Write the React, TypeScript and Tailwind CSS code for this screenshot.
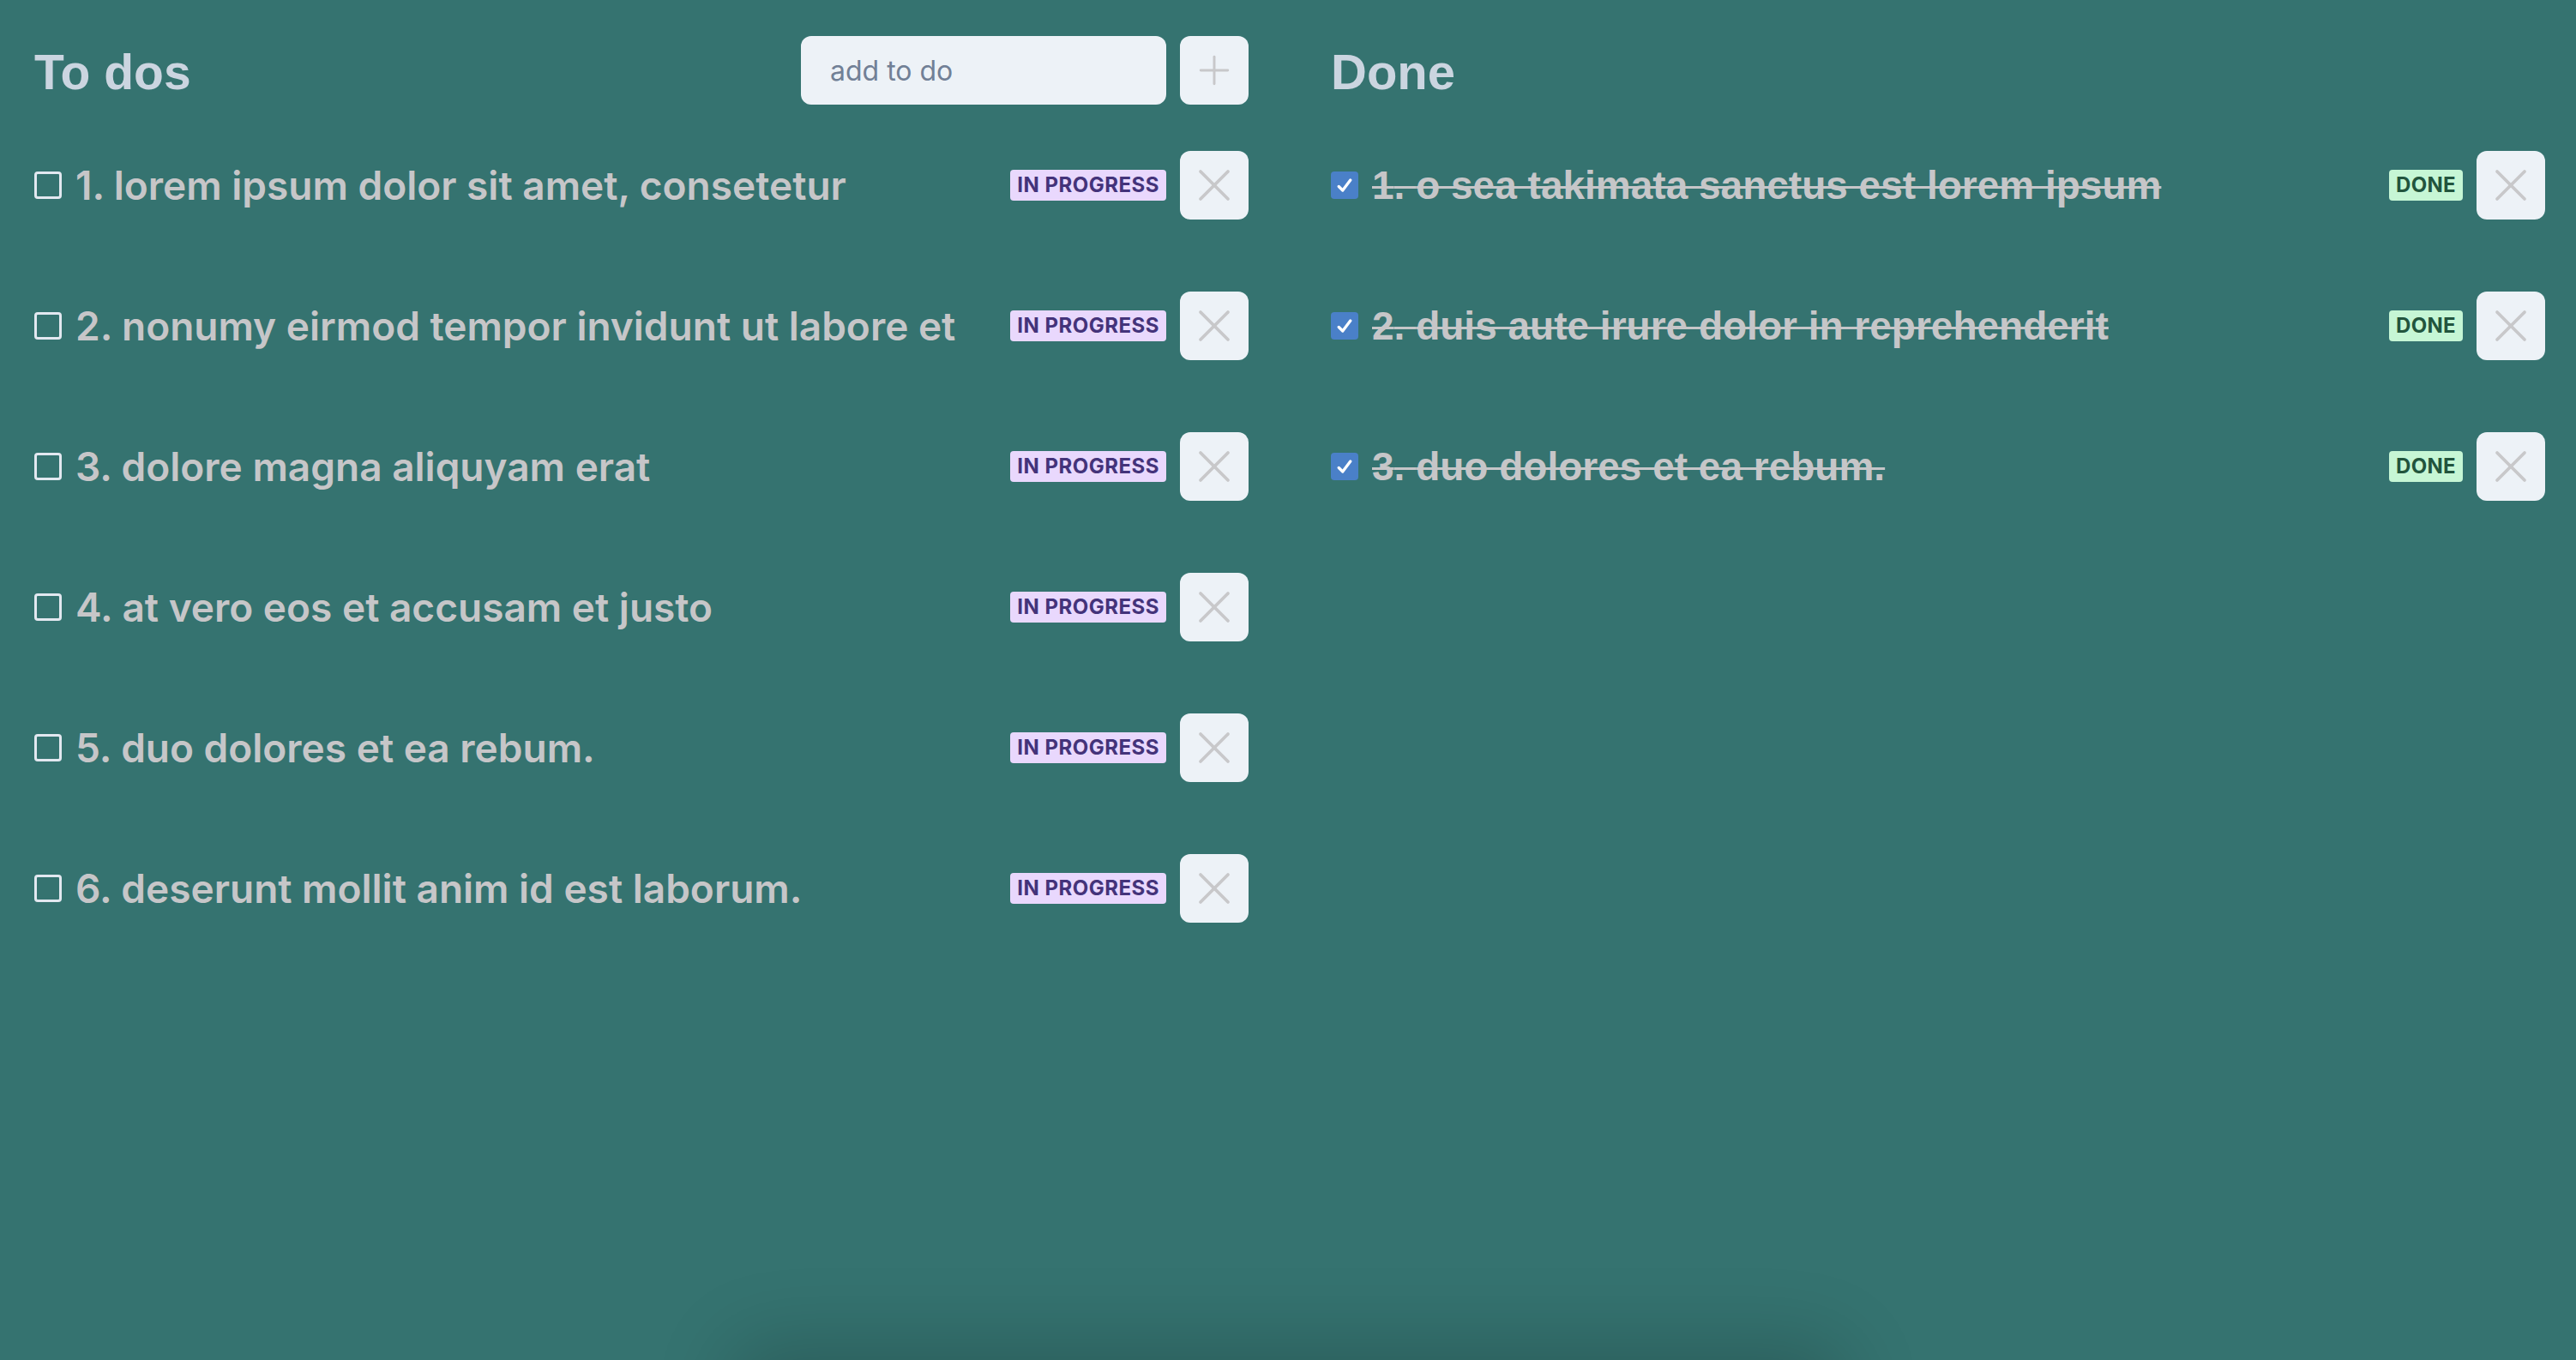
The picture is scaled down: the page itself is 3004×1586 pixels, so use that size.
import { X, Plus } from 'lucide-react'

const todos = [
  'lorem ipsum dolor sit amet, consetetur',
  'nonumy eirmod tempor invidunt ut labore et',
  'dolore magna aliquyam erat',
  'at vero eos et accusam et justo',
  'duo dolores et ea rebum.',
  'deserunt mollit anim id est laborum.',
]

const done = [
  'o sea takimata sanctus est lorem ipsum',
  'duis aute irure dolor in reprehenderit',
  'duo dolores et ea rebum.',
]

function IconButton({ children, title }: { children: React.ReactNode; title: string }) {
  return (
    <button
      type="button"
      title={title}
      className="w-[80px] h-[80px] shrink-0 flex items-center justify-center rounded-[12px] bg-[#edf2f7] text-[#c8c8ca]"
    >
      {children}
    </button>
  )
}

function Row({ text, index, checked }: { text: string; index: number; checked?: boolean }) {
  return (
    <div className="flex items-center h-[80px]">
      {/* Checkbox */}
      {checked ? (
        <span className="w-[32px] h-[32px] shrink-0 rounded-[4px] bg-[#4a80c8] flex items-center justify-center">
          <svg viewBox="0 0 12 10" className="w-[18px] h-[16px]" fill="none" stroke="white" strokeWidth={2.2} strokeLinecap="round" strokeLinejoin="round">
            <polyline points="1.5 6 4.5 9 10.5 1" />
          </svg>
        </span>
      ) : (
        <span className="w-[32px] h-[32px] shrink-0 rounded-[4px] border-[3px] border-[#e2e8f0]" />
      )}
      <span
        className={`ml-[16px] flex-1 text-[46px] leading-none text-[#c6c6c8] whitespace-nowrap ${
          checked
            ? "font-['Liberation_Sans',Arial,sans-serif] font-bold line-through decoration-[3px]"
            : "font-['Inter',sans-serif] font-semibold"
        }`}
      >
        {index}. {text}
      </span>
      {/* Status badge */}
      {checked ? (
        <span className="mr-[16px] px-[8px] h-[36px] flex items-center rounded-[4px] bg-[#c6f6d5] text-[#22543d] text-[24px] font-bold tracking-[0.3px] font-['Inter',sans-serif]">
          DONE
        </span>
      ) : (
        <span className="mr-[16px] px-[8px] h-[36px] flex items-center rounded-[4px] bg-[#e9d8fd] text-[#44337a] text-[24px] font-bold tracking-[0.5px] font-['Inter',sans-serif]">
          IN PROGRESS
        </span>
      )}
      <IconButton title="Delete">
        <X className="w-[64px] h-[64px]" strokeWidth={1.4} />
      </IconButton>
    </div>
  )
}

export default function App() {
  return (
    <div className="relative h-[1586px] overflow-hidden bg-[#357370]">
      <div className="grid grid-cols-2 gap-[96px] pl-[40px] pr-[36px] pt-[42px]">
        {/* To dos column */}
        <div>
          <div className="flex items-center justify-between h-[80px]">
            <h2 className="mt-[4px] text-[57px] font-bold leading-none text-[#cbd5e0] font-['Liberation_Sans',Arial,sans-serif]">
              To dos
            </h2>
            <div className="flex items-center gap-[16px]">
              <input
                placeholder="add to do"
                className="w-[426px] h-[80px] rounded-[12px] bg-[#edf2f7] px-[34px] text-[32px] font-['Inter',sans-serif] placeholder:text-[#718096] outline-none"
              />
              <IconButton title="Add">
                <Plus className="w-[54px] h-[54px]" strokeWidth={1.3} />
              </IconButton>
            </div>
          </div>
          <div className="mt-[54px] flex flex-col gap-[84px]">
            {todos.map((t, i) => (
              <Row key={t} text={t} index={i + 1} />
            ))}
          </div>
        </div>

        {/* Done column */}
        <div>
          <div className="flex items-center h-[80px]">
            <h2 className="mt-[4px] text-[58px] font-bold leading-none text-[#cbd5e0] font-['Liberation_Sans',Arial,sans-serif]">
              Done
            </h2>
          </div>
          <div className="mt-[54px] flex flex-col gap-[84px]">
            {done.map((t, i) => (
              <Row key={t} text={t} index={i + 1} checked />
            ))}
          </div>
        </div>
      </div>

      {/* soft shadow of something just below the fold */}
      <div className="absolute top-full left-1/2 -translate-x-1/2 w-[1300px] h-[200px] rounded-[40px] shadow-[0_-20px_90px_rgba(0,0,0,0.18)]" />
    </div>
  )
}
